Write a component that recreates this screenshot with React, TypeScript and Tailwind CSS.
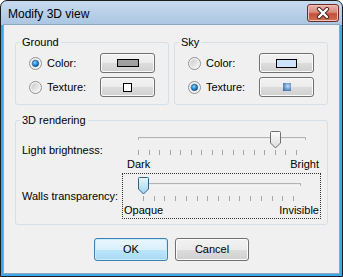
import React from "react";

function Radio({ checked }: { checked: boolean }) {
  return (
    <svg width="13" height="13" viewBox="0 0 13 13" className="shrink-0">
      <defs>
        <linearGradient id="rbg" x1="0" y1="0" x2="1" y2="1">
          <stop offset="0" stopColor="#c9c9c9" />
          <stop offset="1" stopColor="#f7f7f7" />
        </linearGradient>
        <radialGradient id="rdot" cx="0.4" cy="0.35" r="0.7">
          <stop offset="0" stopColor="#8fd8ff" />
          <stop offset="0.5" stopColor="#2f8fd6" />
          <stop offset="1" stopColor="#0d4f8f" />
        </radialGradient>
      </defs>
      <circle cx="6.5" cy="6.5" r="6" fill="#f4f4f4" stroke="#8e8f8f" />
      <circle cx="6.5" cy="6.5" r="4.3" fill="url(#rbg)" />
      {checked && <circle cx="6.5" cy="6.5" r="3.2" fill="url(#rdot)" stroke="#1c5180" strokeWidth="0.6" />}
    </svg>
  );
}

function WinButton({ children, def = false, className = "" }: { children: React.ReactNode; def?: boolean; className?: string }) {
  return (
    <div
      className={
        "flex items-center justify-center rounded-[3px] border " +
        (def
          ? "border-[#3c7fb1] bg-[linear-gradient(#eaf6fd,#d9f0fc_50%,#bee6fd_50%,#a7d9f5)] shadow-[inset_0_0_0_1px_#c9ebfc] "
          : "border-[#707070] bg-[linear-gradient(#f2f2f2,#ebebeb_50%,#dddddd_50%,#cfcfcf)] shadow-[inset_0_0_0_1px_#fbfbfb] ") +
        className
      }
    >
      {children}
    </div>
  );
}

function Thumb({ cx, focused }: { cx: number; focused: boolean }) {
  const id = focused ? "thf" : "thn";
  return (
    <g transform={`translate(${cx - 5.5},3)`}>
      <defs>
        <linearGradient id={id} x1="0" y1="0" x2="0" y2="1">
          <stop offset="0" stopColor={focused ? "#eaf7fe" : "#fdfdfd"} />
          <stop offset="1" stopColor={focused ? "#9ed3f2" : "#dcdcdc"} />
        </linearGradient>
      </defs>
      <path
        d="M1.5 0.5 H9.5 Q10.5 0.5 10.5 1.5 V12 L5.5 17 L0.5 12 V1.5 Q0.5 0.5 1.5 0.5 Z"
        fill={`url(#${id})`}
        stroke={focused ? "#2c628b" : "#707070"}
        strokeWidth="1"
      />
    </g>
  );
}

function Slider({
  trackFrom,
  trackTo,
  tickFrom,
  tickTo,
  ticks,
  value,
  focused,
  left,
  right,
  pl,
}: {
  trackFrom: number;
  trackTo: number;
  tickFrom: number;
  tickTo: number;
  ticks: number;
  value: number;
  focused: boolean;
  left: string;
  right: string;
  pl: string;
}) {
  const step = (tickTo - tickFrom) / (ticks - 1);
  const xs = Array.from({ length: ticks }, (_, i) => Math.round(tickFrom + i * step) + 0.5);
  return (
    <div
      className={
        "w-[199px] h-[46px] border flex flex-col " +
        (focused ? "border-dotted border-[#333]" : "border-transparent")
      }
    >
      <svg width="197" height="29" viewBox="0 0 197 29" className="block">
        <rect x={trackFrom + 0.5} y="9.5" width={trackTo - trackFrom} height="2" fill="#e7eaea" stroke="#b4b4b4" />
        <line x1={trackFrom + 1} y1="11.5" x2={trackTo} y2="11.5" stroke="#f4f4f4" />
        {xs.map((x, i) => (
          <line key={i} x1={x} y1="22" x2={x} y2="27" stroke="#a6a6a6" strokeWidth="1" />
        ))}
        <Thumb cx={xs[value]} focused={focused} />
      </svg>
      <div className={"flex justify-between leading-[15px] pr-[1px] " + pl}>
        <span>{left}</span>
        <span>{right}</span>
      </div>
    </div>
  );
}

function Group({ title, children, className = "" }: { title: string; children: React.ReactNode; className?: string }) {
  return (
    <fieldset className={"border border-[#d5dfe5] rounded-[3px] m-0 p-0 " + className}>
      <legend className="ml-[4px] px-[2px] leading-[15px]">{title}</legend>
      {children}
    </fieldset>
  );
}

function ChoiceGroup({
  title,
  colorSel,
  colorSwatch,
  textureSwatch,
}: {
  title: string;
  colorSel: boolean;
  colorSwatch: React.ReactNode;
  textureSwatch: React.ReactNode;
}) {
  return (
    <Group title={title} className="w-[154px]">
      <div className="flex flex-col gap-[4px] pt-[3px] pb-[7px] pl-[13px]">
        <div className="flex items-center h-[20px]">
          <div className="w-[71px] flex items-center gap-[5px]">
            <Radio checked={colorSel} />
            <span>Color:</span>
          </div>
          <WinButton className="w-[55px] h-[20px]">{colorSwatch}</WinButton>
        </div>
        <div className="flex items-center h-[20px]">
          <div className="w-[71px] flex items-center gap-[5px]">
            <Radio checked={!colorSel} />
            <span>Texture:</span>
          </div>
          <WinButton className="w-[55px] h-[20px]">{textureSwatch}</WinButton>
        </div>
      </div>
    </Group>
  );
}

export default function App() {
  return (
    <div className="w-[343px] h-[277px] font-['Liberation_Sans',Arial,sans-serif] text-[11px] text-black">
      <div className="w-full h-full flex flex-col rounded-t-[7px] border border-[#1c1c1c] bg-[linear-gradient(#c7dbef,#aac5e2_24px,#3ea9ea_24px)] overflow-hidden">
        <div className="h-[23px] shrink-0 flex items-start justify-between pl-[7px] pr-[3px] pt-[3px]">
          <span className="text-[12px] leading-[15px] mt-[3px]">Modify 3D view</span>
          <div className="w-[32px] h-[18px] rounded-[3px] border border-[#6e2a23] bg-[linear-gradient(#e8b3a8,#d98b7c_45%,#c4503b_55%,#cf6f52)] shadow-[inset_0_0_0_1px_#eec3b8] flex items-center justify-center">
            <svg width="14" height="12" viewBox="0 0 14 12">
              <path d="M3 2 L11 10 M11 2 L3 10" stroke="#4a2320" strokeWidth="4.2" strokeLinecap="round" />
              <path d="M3 2 L11 10 M11 2 L3 10" stroke="#ffffff" strokeWidth="2.4" strokeLinecap="round" />
            </svg>
          </div>
        </div>
        <div className="flex-1 mx-[2px] mb-[2px] border border-[#8da6c1] bg-[#f0f0f0] flex flex-col px-[11px] pt-[10px]">
          <div className="flex gap-[5px]">
            <ChoiceGroup
              title="Ground"
              colorSel={true}
              colorSwatch={<div className="w-[22px] h-[8px] border border-black bg-[#a0a0a0]" />}
              textureSwatch={<div className="w-[9px] h-[9px] border border-black bg-white" />}
            />
            <ChoiceGroup
              title="Sky"
              colorSel={false}
              colorSwatch={<div className="w-[21px] h-[9px] border border-black bg-[#cce4fb]" />}
              textureSwatch={
                <div className="w-[8px] h-[8px] bg-[radial-gradient(circle_at_60%_40%,#c4dcf2,#6b98c9_50%,#2f5f99)]" />
              }
            />
          </div>
          <Group title="3D rendering" className="mt-[8px] w-[313px]">
            <div className="grid grid-cols-[100px_199px] items-center pl-[6px] pb-[5px] -mt-px">
              <span>Light brightness:</span>
              <Slider
                trackFrom={15}
                trackTo={182}
                tickFrom={15}
                tickTo={173}
                ticks={16}
                value={13}
                focused={false}
                left="Dark"
                right="Bright"
                pl="pl-[4px]"
              />
              <span>Walls transparency:</span>
              <Slider
                trackFrom={15}
                trackTo={177}
                tickFrom={20}
                tickTo={170}
                ticks={15}
                value={0}
                focused={true}
                left="Opaque"
                right="Invisible"
                pl="pl-[1px]"
              />
            </div>
          </Group>
          <div className="flex justify-center gap-[7px] mt-[13px]">
            <WinButton def className="w-[74px] h-[23px]">
              OK
            </WinButton>
            <WinButton className="w-[74px] h-[23px]">Cancel</WinButton>
          </div>
        </div>
      </div>
    </div>
  );
}
